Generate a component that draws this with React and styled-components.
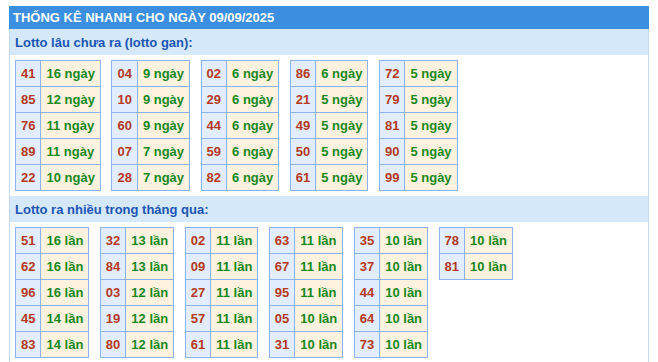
import React from "react";
import styled, { createGlobalStyle } from "styled-components";

const GlobalStyle = createGlobalStyle`
	body {
		margin: 0;
		background: #ffffff;
		font-family: "Liberation Sans", Arial, sans-serif;
	}
`;

const Page = styled.div`
	width: 658px;
	padding: 6px 0 0 9px;
	box-sizing: border-box;
`;

const Box = styled.div`
	width: 640px;
	box-sizing: border-box;
`;

const Header = styled.div`
	height: 23px;
	background: #3c8ee0;
	color: #ffffff;
	font-weight: bold;
	font-size: 13px;
	display: flex;
	align-items: center;
	padding-left: 4px;
`;

const Body = styled.div`
	border-left: 1px solid #c3d7ee;
	border-right: 1px solid #c3d7ee;
	padding-bottom: 6px;
`;

const SubHeader = styled.div`
	height: 26px;
	background: #d5e8fc;
	color: #1a55b5;
	font-weight: bold;
	font-size: 13px;
	display: flex;
	align-items: center;
	padding-left: 5px;
	margin-top: ${(p) => (p.$first ? "0" : "5px")};
`;

const Tables = styled.div`
	display: flex;
	align-items: flex-start;
	gap: 10.5px;
	padding: 5px 5px 0;
`;

const Table = styled.table`
	border-collapse: collapse;
	font-size: 13px;
	font-weight: bold;
`;

const Cell = styled.td`
	border: 1px solid #8db2f0;
	height: 26px;
	padding: 0 5px;
	box-sizing: border-box;
	white-space: nowrap;
	background: ${(p) => (p.$num ? "#e2eeff" : "#fff3e0")};
	color: ${(p) => (p.$num ? "#b5391c" : "#17881a")};
	text-align: ${(p) => (p.$num ? "center" : "left")};
`;

const gan = [
	[["41", 16], ["85", 12], ["76", 11], ["89", 11], ["22", 10]],
	[["04", 9], ["10", 9], ["60", 9], ["07", 7], ["28", 7]],
	[["02", 6], ["29", 6], ["44", 6], ["59", 6], ["82", 6]],
	[["86", 6], ["21", 5], ["49", 5], ["50", 5], ["61", 5]],
	[["72", 5], ["79", 5], ["81", 5], ["90", 5], ["99", 5]],
];

const nhieu = [
	[["51", 16], ["62", 16], ["96", 16], ["45", 14], ["83", 14]],
	[["32", 13], ["84", 13], ["03", 12], ["19", 12], ["80", 12]],
	[["02", 11], ["09", 11], ["27", 11], ["57", 11], ["61", 11]],
	[["63", 11], ["67", 11], ["95", 11], ["05", 10], ["31", 10]],
	[["35", 10], ["37", 10], ["44", 10], ["64", 10], ["73", 10]],
	[["78", 10], ["81", 10]],
];

function LotoTable({ rows, unit }) {
	return (
		<Table>
			<tbody>
				{rows.map(([num, count]) => (
					<tr key={num}>
						<Cell $num>{num}</Cell>
						<Cell>
							{count} {unit}
						</Cell>
					</tr>
				))}
			</tbody>
		</Table>
	);
}

function App() {
	return (
		<Page>
			<GlobalStyle />
			<Box>
				<Header>THỐNG KÊ NHANH CHO NGÀY 09/09/2025</Header>
				<Body>
					<SubHeader $first>Lotto lâu chưa ra (lotto gan):</SubHeader>
					<Tables>
						{gan.map((rows, i) => (
							<LotoTable key={i} rows={rows} unit="ngày" />
						))}
					</Tables>
					<SubHeader>Lotto ra nhiều trong tháng qua:</SubHeader>
					<Tables>
						{nhieu.map((rows, i) => (
							<LotoTable key={i} rows={rows} unit="lần" />
						))}
					</Tables>
				</Body>
			</Box>
		</Page>
	);
}

export default App;
